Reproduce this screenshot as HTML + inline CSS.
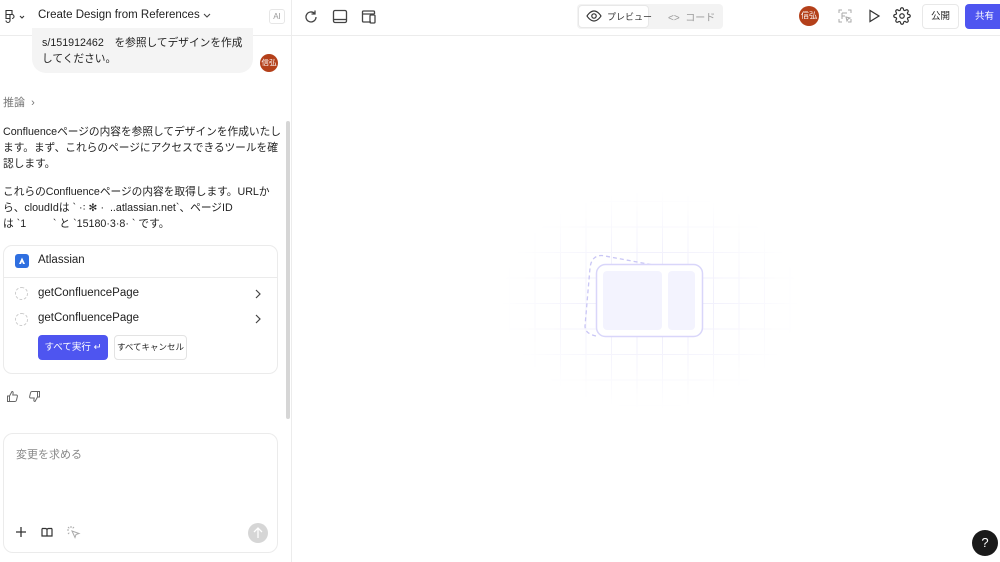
<!DOCTYPE html>
<html><head><meta charset="utf-8"><style>
*{box-sizing:border-box;margin:0;padding:0}
body{width:1000px;height:562px;overflow:hidden;background:#fff;font-family:"Liberation Sans","Noto Sans CJK JP",sans-serif;color:#1f1f1f;position:relative}
.abs{position:absolute;white-space:nowrap}
.top{position:absolute;left:0;top:0;width:1000px;height:36px;border-bottom:1px solid #ececec}
.vl{position:absolute;left:291px;top:0;width:1px;height:562px;background:#ececec}
.txt{font-size:10.7px;line-height:16px}
svg{position:absolute}
</style></head><body>
<div class="top"></div>
<div class="vl"></div>
<svg style="left:4px;top:9px" width="22" height="16" viewBox="0 0 22 16" fill="none" stroke="#333" stroke-width="1.1"><path d="M2 1.5h6v4H2zM2 5.5h4v4H2zM2 9.5h4v2a2 2 0 0 1-4 0M8 5.5a2 2 0 1 1 0 4"/><path d="M16 7l2 2 2-2"/></svg>
<div class="abs" style="left:38px;top:9px;font-size:11.5px;font-weight:500">Create Design from References</div>
<svg style="left:202px;top:12px" width="10" height="8"><path d="M2 2l3 3 3-3" stroke="#444" fill="none" stroke-width="1.1"/></svg>
<div class="abs" style="left:269px;top:9px;width:16px;height:15px;border:1px solid #e6e6e6;border-radius:3px;font-size:8px;color:#999;text-align:center;line-height:13px">AI</div>
<svg style="left:302px;top:8px" width="18" height="18" viewBox="0 0 18 18" fill="none" stroke="#444" stroke-width="1.3"><path d="M14 9a5 5 0 1 1-1.5-3.6M13 2.5v3.5H9.5"/></svg>
<svg style="left:331px;top:8px" width="18" height="18" viewBox="0 0 18 18" fill="none" stroke="#444" stroke-width="1.3"><rect x="2.5" y="2.5" width="13" height="12" rx="1.5"/><path d="M2.5 11.5h13"/></svg>
<svg style="left:360px;top:8px" width="18" height="18" viewBox="0 0 18 18" fill="none" stroke="#444" stroke-width="1.3"><path d="M11 14H3.5a1 1 0 0 1-1-1V4a1 1 0 0 1 1-1h10a1 1 0 0 1 1 1v2M2.5 6h12"/><rect x="10" y="7" width="5" height="8" rx="1"/></svg>
<div class="abs" style="left:577px;top:4px;width:146px;height:25px;background:#f3f3f3;border-radius:4px"></div>
<div class="abs" style="left:578px;top:5px;width:71px;height:23px;background:#fff;border:1px solid #e8e8e8;border-radius:4px"></div>
<svg style="left:586px;top:9px" width="16" height="14" viewBox="0 0 16 14" fill="none" stroke="#333" stroke-width="1.2"><path d="M1 7s3-5 7-5 7 5 7 5-3 5-7 5-7-5-7-5z"/><circle cx="8" cy="7" r="2.2"/></svg>
<div class="abs" style="left:607px;top:10px;font-size:9px;color:#333">プレビュー</div>
<div class="abs" style="left:668px;top:9px;font-size:10px;color:#999">&lt;&gt;&nbsp; コード</div>
<div class="abs" style="left:799px;top:6px;width:20px;height:20px;border-radius:50%;background:#b4401a;color:#fff;font-size:8px;text-align:center;line-height:20px">信弘</div>
<svg style="left:837px;top:8px" width="16" height="16" viewBox="0 0 16 16" fill="none" stroke="#aaa" stroke-width="1"><path d="M2 5V2h3M11 2h3v3M14 11v3h-3M5 14H2v-3M5 5h5M5 8h3M5 5v6"/><path d="M9 9l4 1-2 1-1 2z"/></svg>
<svg style="left:866px;top:8px" width="16" height="16" viewBox="0 0 16 16" fill="none" stroke="#333" stroke-width="1.2"><path d="M4 2.5v11l9-5.5z"/></svg>
<svg style="left:893px;top:7px" width="18" height="18" viewBox="0 0 24 24" fill="none" stroke="#333" stroke-width="1.6"><circle cx="12" cy="12" r="3"/><path d="M19.4 15a1.65 1.65 0 0 0 .33 1.82l.06.06a2 2 0 1 1-2.830 2.830l-.06-.06a1.65 1.65 0 0 0-1.82-.33 1.65 1.65 0 0 0-1 1.51V21a2 2 0 1 1-4 0v-.09A1.65 1.65 0 0 0 9 19.4a1.65 1.65 0 0 0-1.82.33l-.06.06a2 2 0 1 1-2.83-2.83l.06-.06A1.65 1.65 0 0 0 4.68 15a1.65 1.65 0 0 0-1.51-1H3a2 2 0 1 1 0-4h.09A1.65 1.65 0 0 0 4.6 9a1.65 1.65 0 0 0-.33-1.82l-.06-.06a2 2 0 1 1 2.83-2.83l.06.06A1.65 1.65 0 0 0 9 4.68 1.65 1.65 0 0 0 10 3.17V3a2 2 0 1 1 4 0v.09a1.65 1.65 0 0 0 1 1.51 1.650 1.650 0 0 0 1.82-.33l.06-.06a2 2 0 1 1 2.83 2.83l-.06.06A1.65 1.65 0 0 0 19.4 9a1.65 1.65 0 0 0 1.51 1H21a2 2 0 1 1 0 4h-.09a1.65 1.65 0 0 0-1.51 1z"/></svg>
<div class="abs" style="left:922px;top:4px;width:37px;height:25px;border:1px solid #e8e8e8;border-radius:4px;font-size:9.5px;text-align:center;line-height:23px">公開</div>
<div class="abs" style="left:965px;top:4px;width:40px;height:25px;background:#4e55f0;border-radius:4px;font-size:9.5px;color:#fff;line-height:25px;padding-left:10px">共有</div>
<div class="abs" style="left:32px;top:28px;width:221px;height:45px;background:#f4f4f4;border-radius:0 0 14px 14px"></div>
<div class="abs txt" style="left:42px;top:35px;color:#222">s/151912462　を参照してデザインを作成<br>してください。</div>
<div class="abs" style="left:260px;top:54px;width:18px;height:18px;border-radius:50%;background:#b4401a;color:#fff;font-size:7.5px;text-align:center;line-height:18px">信弘</div>
<div class="abs" style="left:3px;top:94px;font-size:11px;color:#777">推論 &nbsp;›</div>
<div class="abs txt" style="left:3px;top:124px">Confluenceページの内容を参照してデザインを作成いたし<br>ます。まず、これらのページにアクセスできるツールを確<br>認します。</div>
<div class="abs txt" style="left:3px;top:184px">これらのConfluenceページの内容を取得します。URLか<br>ら、cloudIdは `&nbsp;·꞉ ✻ ·&nbsp; ..atlassian.net`、ページID<br>は `1&nbsp;&nbsp;&nbsp;&nbsp;&nbsp;&nbsp;&nbsp;&nbsp; ` と `15180·3·8· ` です。</div>
<div class="abs" style="left:286px;top:121px;width:4px;height:298px;background:#d6d6d6;border-radius:2px"></div>
<div class="abs" style="left:3px;top:245px;width:275px;height:129px;border:1px solid #ebebeb;border-radius:9px"></div>
<div class="abs" style="left:3px;top:277px;width:275px;height:1px;background:#ebebeb"></div>
<div class="abs" style="left:15px;top:254px;width:14px;height:14px;background:#2f6fe0;border-radius:3px"></div>
<svg style="left:15px;top:254px" width="14" height="14"><path d="M7 3.5L4 10h2l1-2.2L8 10h2z" fill="#fff"/></svg>
<div class="abs" style="left:38px;top:254px;font-size:11.5px">Atlassian</div>
<div class="abs" style="left:15px;top:287px;width:13px;height:13px;border:1px dashed #ccc;border-radius:50%"></div>
<div class="abs" style="left:15px;top:313px;width:13px;height:13px;border:1px dashed #ccc;border-radius:50%"></div>
<div class="abs" style="left:38px;top:287px;font-size:11.5px;font-weight:500">getConfluencePage</div>
<div class="abs" style="left:38px;top:312px;font-size:11.5px;font-weight:500">getConfluencePage</div>
<svg style="left:254px;top:288px" width="8" height="12"><path d="M2 2l4 4-4 4" stroke="#444" fill="none" stroke-width="1.2"/></svg>
<svg style="left:254px;top:313px" width="8" height="12"><path d="M2 2l4 4-4 4" stroke="#444" fill="none" stroke-width="1.2"/></svg>
<div class="abs" style="left:38px;top:335px;width:70px;height:25px;background:#4e55f0;border-radius:4px;color:#fff;font-size:9.5px;line-height:25px;text-align:center">すべて実行 ↵</div>
<div class="abs" style="left:114px;top:335px;width:73px;height:25px;border:1px solid #e3e3e3;border-radius:4px;font-size:8.5px;line-height:23px;text-align:center">すべてキャンセル</div>
<svg style="left:6px;top:390px" width="13" height="13" viewBox="0 0 13 13" fill="none" stroke="#666" stroke-width="1"><path d="M1.5 6h2v5.5h-2zM3.5 6l2.5-4.5c1 0 1.3.7 1.1 1.7L6.8 5h3.5c.8 0 1.3.7 1.1 1.4l-1 4c-.2.6-.7 1.1-1.3 1.1H3.5"/></svg>
<svg style="left:28px;top:390px" width="13" height="13" viewBox="0 0 13 13" fill="none" stroke="#666" stroke-width="1"><g transform="rotate(180 6.5 6.5)"><path d="M1.5 6h2v5.5h-2zM3.5 6l2.5-4.5c1 0 1.3.7 1.1 1.7L6.8 5h3.5c.8 0 1.3.7 1.1 1.4l-1 4c-.2.6-.7 1.1-1.3 1.1H3.5"/></g></svg>
<div class="abs" style="left:3px;top:433px;width:275px;height:120px;border:1px solid #ebebeb;border-radius:10px"></div>
<div class="abs" style="left:16px;top:446px;font-size:11px;color:#888">変更を求める</div>
<svg style="left:15px;top:526px" width="12" height="12"><path d="M6 1v10M1 6h10" stroke="#333" stroke-width="1.3"/></svg>
<svg style="left:40px;top:526px" width="14" height="12" viewBox="0 0 14 12" fill="none" stroke="#333" stroke-width="1.2"><path d="M2 2.5h3.5C6.3 2.5 7 3.1 7 3.9V10M12 2.5H8.5C7.700 2.5 7 3.1 7 3.9M2 2.5v7.5h10V2.5"/></svg>
<svg style="left:65px;top:525px" width="16" height="15" viewBox="0 0 16 15" fill="none" stroke="#aaa" stroke-width="1"><path d="M6 1v2M2 5h2M3 2l1.3 1.3M9 2L7.7 3.3M3 9l1.3-1.3"/><path d="M7 6l7 2.5-3 1-1 3z"/></svg>
<div class="abs" style="left:248px;top:523px;width:20px;height:20px;border-radius:50%;background:#d6d6d6"></div>
<svg style="left:248px;top:523px" width="20" height="20"><path d="M10 15V5M6 9l4-4 4 4" stroke="#fff" fill="none" stroke-width="1.3"/></svg>
<div class="abs" style="left:500px;top:190px;width:300px;height:220px;background-image:linear-gradient(#efeefb 1px,transparent 1px),linear-gradient(90deg,#efeefb 1px,transparent 1px);background-size:25.5px 25.5px;background-position:9px 11px;-webkit-mask-image:radial-gradient(ellipse 50% 50% at 50% 50%,#000 30%,transparent 100%);mask-image:radial-gradient(ellipse 50% 50% at 50% 50%,#000 30%,transparent 100%)"></div>
<svg style="left:580px;top:248px" width="130" height="95" fill="none"><path d="M16 88C7 86 5 82 5 78L10 20C11 10 17 6 25 8L100 22" stroke="#c9c6f5" stroke-width="1.3" stroke-dasharray="4 3"/><rect x="16.5" y="16.5" width="106" height="72" rx="9" fill="#fff" stroke="#d9d6fa" stroke-width="1.5"/><rect x="23" y="23" width="59" height="59" rx="4" fill="#f3f3fe"/><rect x="88" y="23" width="27" height="59" rx="4" fill="#f3f3fe"/></svg>
<div class="abs" style="left:972px;top:530px;width:26px;height:26px;border-radius:50%;background:#1a1a1a;color:#fff;font-size:13px;text-align:center;line-height:26px">?</div>
</body></html>
